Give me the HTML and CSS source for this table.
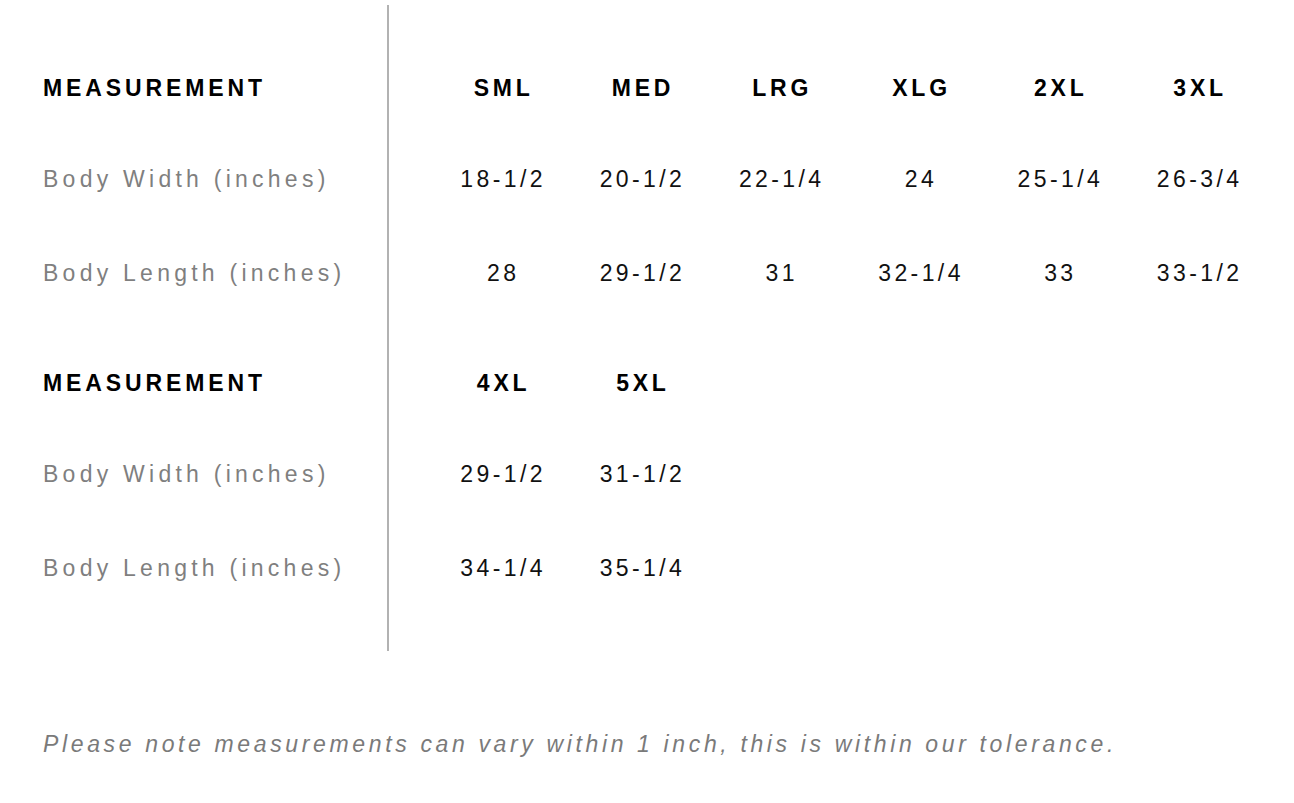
FILE: index.html
```html
<!DOCTYPE html>
<html lang="en">
<head>
<meta charset="utf-8">
<title>Size Chart</title>
<link rel="stylesheet" href="styles.css">
</head>
<body>
<div class="page">
  <div class="chart">
    <div class="labels">
      <div class="section">
        <div class="row head"><span class="label-head">MEASUREMENT</span></div>
        <div class="row"><span class="label">Body Width (inches)</span></div>
        <div class="row last"><span class="label">Body Length (inches)</span></div>
      </div>
      <div class="section">
        <div class="row head"><span class="label-head">MEASUREMENT</span></div>
        <div class="row"><span class="label">Body Width (inches)</span></div>
        <div class="row last"><span class="label">Body Length (inches)</span></div>
      </div>
    </div>
    <div class="values">
      <div class="section grid">
        <div class="cell head">SML</div>
        <div class="cell head">MED</div>
        <div class="cell head">LRG</div>
        <div class="cell head">XLG</div>
        <div class="cell head">2XL</div>
        <div class="cell head">3XL</div>
        <div class="cell">18-1/2</div>
        <div class="cell">20-1/2</div>
        <div class="cell">22-1/4</div>
        <div class="cell">24</div>
        <div class="cell">25-1/4</div>
        <div class="cell">26-3/4</div>
        <div class="cell last">28</div>
        <div class="cell last">29-1/2</div>
        <div class="cell last">31</div>
        <div class="cell last">32-1/4</div>
        <div class="cell last">33</div>
        <div class="cell last">33-1/2</div>
      </div>
      <div class="section grid">
        <div class="cell head">4XL</div>
        <div class="cell head">5XL</div>
        <div class="cell empty"></div>
        <div class="cell empty"></div>
        <div class="cell empty"></div>
        <div class="cell empty"></div>
        <div class="cell">29-1/2</div>
        <div class="cell">31-1/2</div>
        <div class="cell empty"></div>
        <div class="cell empty"></div>
        <div class="cell empty"></div>
        <div class="cell empty"></div>
        <div class="cell last">34-1/4</div>
        <div class="cell last">35-1/4</div>
        <div class="cell last empty"></div>
        <div class="cell last empty"></div>
        <div class="cell last empty"></div>
        <div class="cell last empty"></div>
      </div>
    </div>
  </div>
  <p class="note">Please note measurements can vary within 1 inch, this is within our tolerance.</p>
</div>
</body>
</html>
```
FILE: styles.css
```css
html, body {
  margin: 0;
  padding: 0;
  background: #ffffff;
}

body {
  font-family: "Liberation Sans", Arial, sans-serif;
  font-size: 23px;
  line-height: 1.15;
}

.page {
  padding: 5px 0 0 43px;
}

.chart {
  display: flex;
}

.labels {
  width: 344px;
  border-right: 2px solid #b2b2b2;
  padding: 39px 0 36px;
}

.values {
  padding: 39px 0 36px 43px;
}

.section {
  margin-bottom: 19px;
}

.section:last-child {
  margin-bottom: 0;
}

.row {
  height: 94px;
  display: flex;
  align-items: center;
}

.row.head {
  height: 88px;
}

.label-head {
  font-weight: 700;
  color: #000000;
  letter-spacing: 3.9px;
}

.label {
  color: #7f7f7f;
  letter-spacing: 4.25px;
}

.grid {
  display: grid;
  grid-template-columns: repeat(6, 139.3px);
  grid-template-rows: 88px 94px 94px;
}

.cell {
  display: flex;
  align-items: center;
  justify-content: center;
  color: #111111;
  letter-spacing: 3.4px;
  padding-left: 3px;
}

.cell.head {
  font-weight: 700;
  color: #000000;
  letter-spacing: 3.8px;
  padding-left: 4px;
}

.note {
  margin: 80px 0 0;
  font-style: italic;
  color: #7a7a7a;
  letter-spacing: 3.64px;
  white-space: nowrap;
}
```
